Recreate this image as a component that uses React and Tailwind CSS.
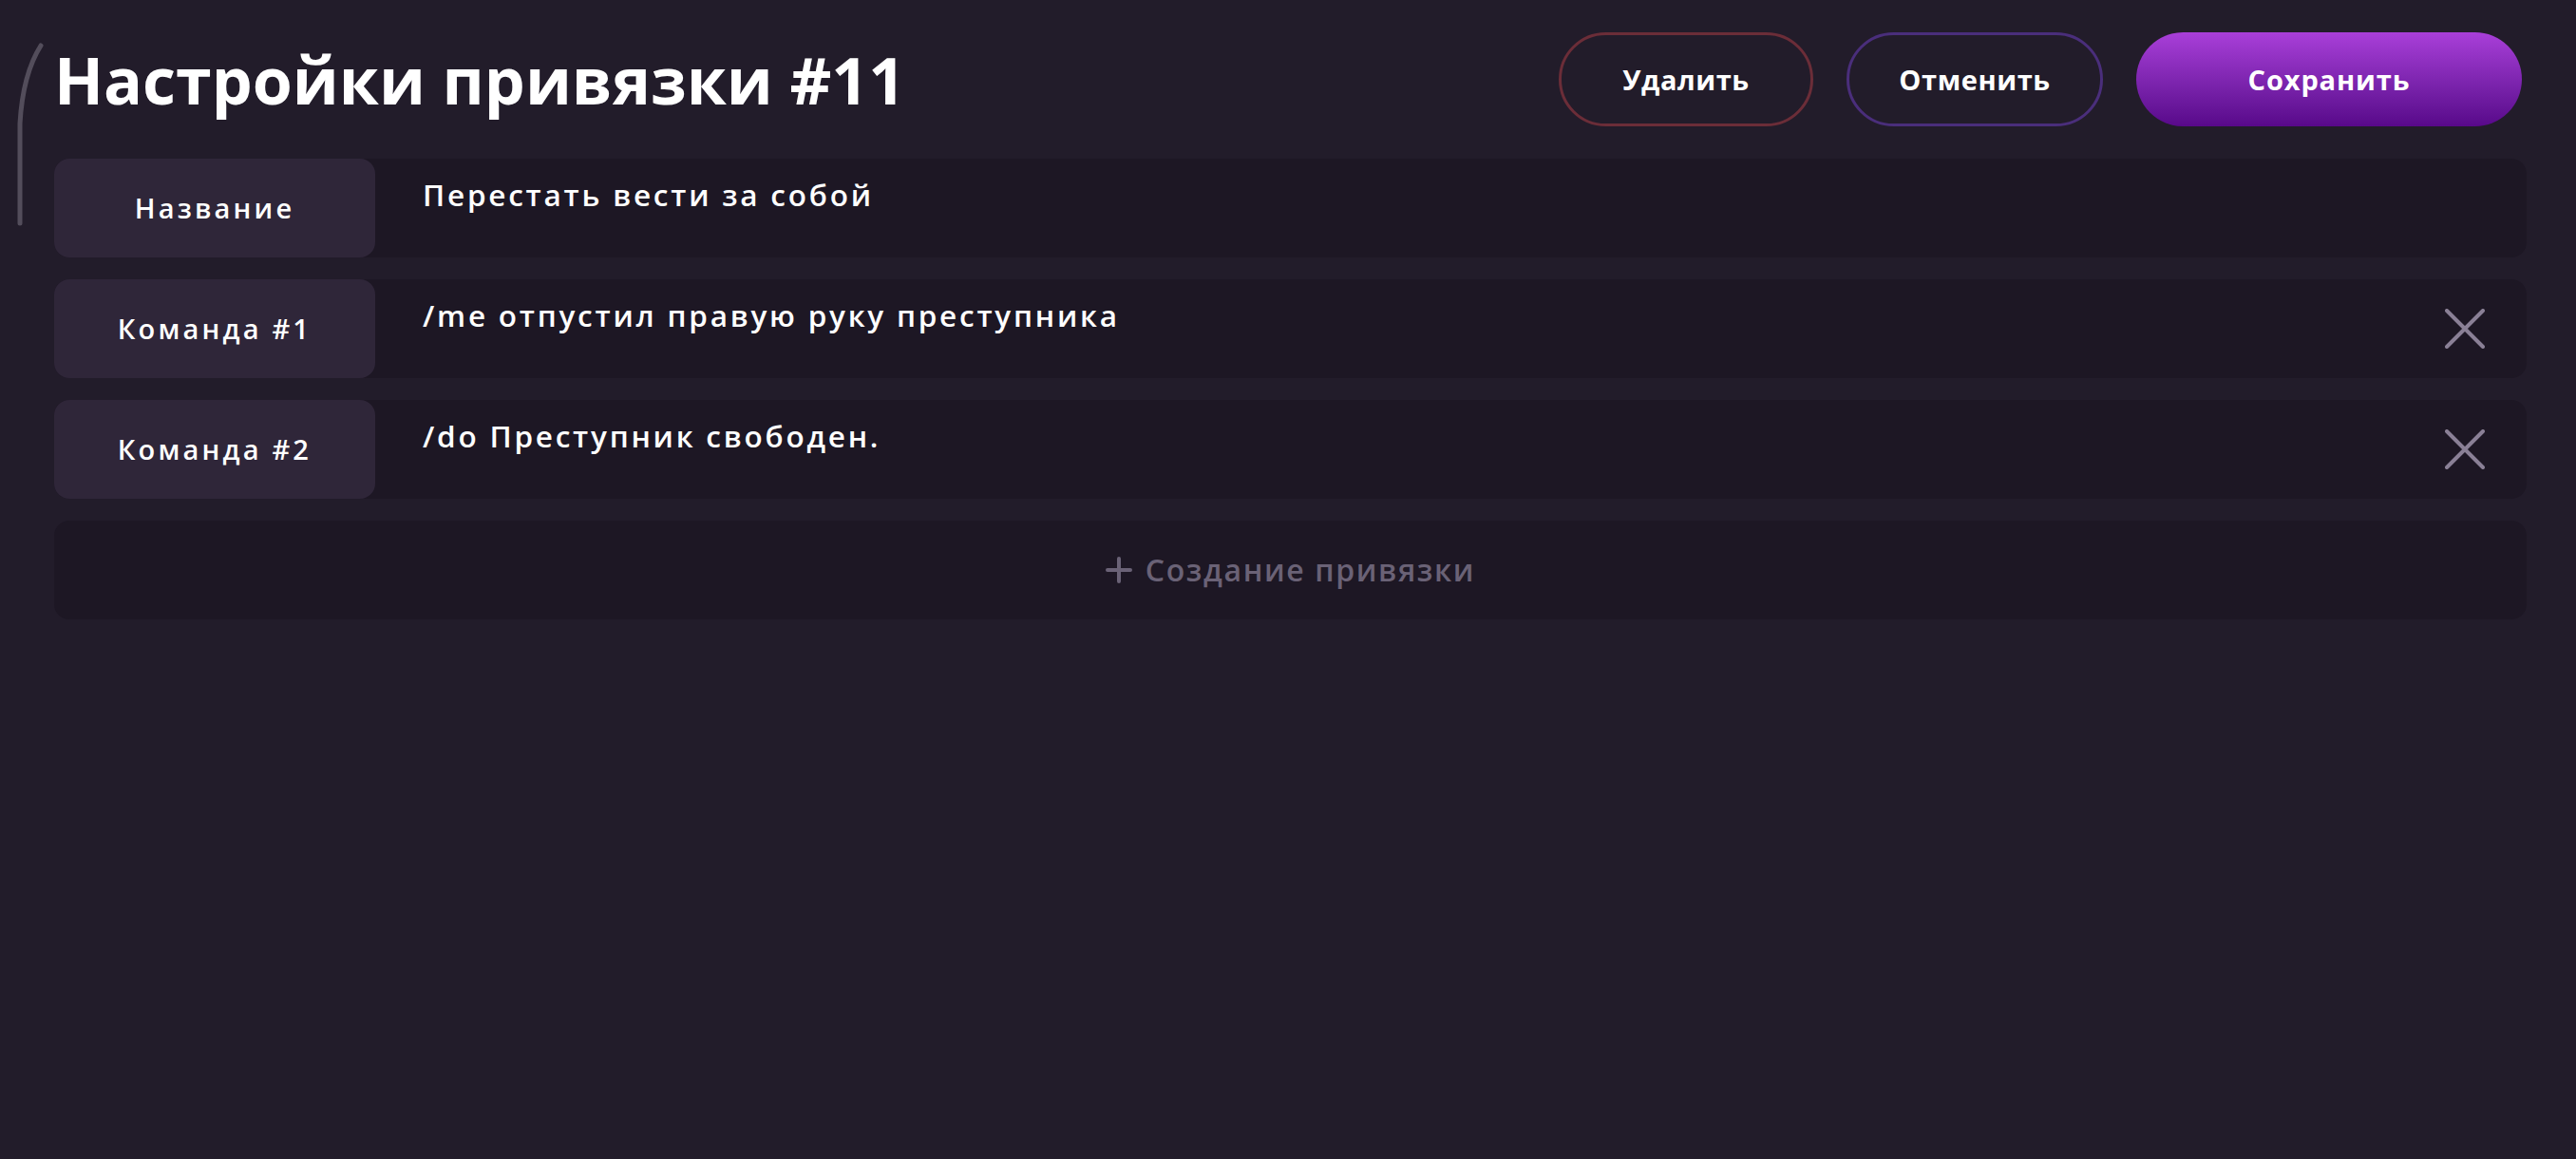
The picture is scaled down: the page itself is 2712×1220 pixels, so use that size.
import React, { useState } from "react";

const rows = [
  { label: "Название", value: "Перестать вести за собой", removable: false },
  { label: "Команда #1", value: "/me отпустил правую руку преступника", removable: true },
  { label: "Команда #2", value: "/do Преступник свободен.", removable: true },
];

function CloseIcon() {
  return (
    <svg width="42" height="42" viewBox="0 0 42 42" fill="none">
      <path d="M2 2L40 40M40 2L2 40" stroke="#8a8096" strokeWidth="4" strokeLinecap="round" />
    </svg>
  );
}

export default function App() {
  const [items] = useState(rows);

  return (
    <div
      className="relative min-h-screen w-full bg-[#221c2a] pl-[57px] pr-[52px] pt-[34px] text-white"
      style={{ fontFamily: '"Open Sans", "Noto Sans", sans-serif' }}
    >
      {/* scroll indicator at the top-left edge */}
      <svg className="absolute left-0 top-0" width="60" height="250" viewBox="0 0 60 250" fill="none">
        <path d="M43 48 Q24 78 21 130 L21 235" stroke="#534d5b" strokeWidth="5" strokeLinecap="round" />
      </svg>

      {/* header */}
      <div className="mr-[5px] flex h-[99px] items-center justify-between">
        <h1 className="text-[68px] font-bold leading-none">Настройки привязки #11</h1>
        <div className="flex items-center gap-[35px]">
          <button className="flex h-[99px] w-[268px] items-center justify-center rounded-full border-[3px] border-[#6b2d38] bg-transparent text-[29px] font-bold tracking-[0.02em]">
            Удалить
          </button>
          <button className="flex h-[99px] w-[270px] items-center justify-center rounded-full border-[3px] border-[#4a2e7b] bg-transparent text-[29px] font-bold tracking-[0.02em]">
            Отменить
          </button>
          <button className="flex h-[99px] w-[406px] items-center justify-center rounded-full bg-gradient-to-b from-[#a93fd9] to-[#58088a] text-[29px] font-bold tracking-[0.03em]">
            Сохранить
          </button>
        </div>
      </div>

      {/* rows */}
      <div className="mt-[34px] flex flex-col gap-[23px]">
        {items.map((row) => (
          <div key={row.label} className="flex h-[104px] rounded-[16px] bg-[#1d1724]">
            <div className="flex w-[338px] shrink-0 items-center justify-center rounded-[16px] bg-[#2f2639] text-[29px] font-semibold tracking-[0.11em]">
              {row.label}
            </div>
            <div className="flex-1 pl-[50px] pt-[14px] text-[31.5px] font-semibold tracking-[0.088em]">
              {row.value}
            </div>
            {row.removable && (
              <div className="flex items-center pr-[44px]">
                <CloseIcon />
              </div>
            )}
          </div>
        ))}

        <button className="flex h-[104px] items-center justify-center gap-[14px] rounded-[16px] bg-[#1d1724] text-[32px] font-semibold tracking-[0.05em] text-[#6a6276]">
          <svg width="28" height="28" viewBox="0 0 28 28" fill="none">
            <path d="M14 2V26M2 14H26" stroke="#6a6276" strokeWidth="4" strokeLinecap="round" />
          </svg>
          Создание привязки
        </button>
      </div>
    </div>
  );
}
